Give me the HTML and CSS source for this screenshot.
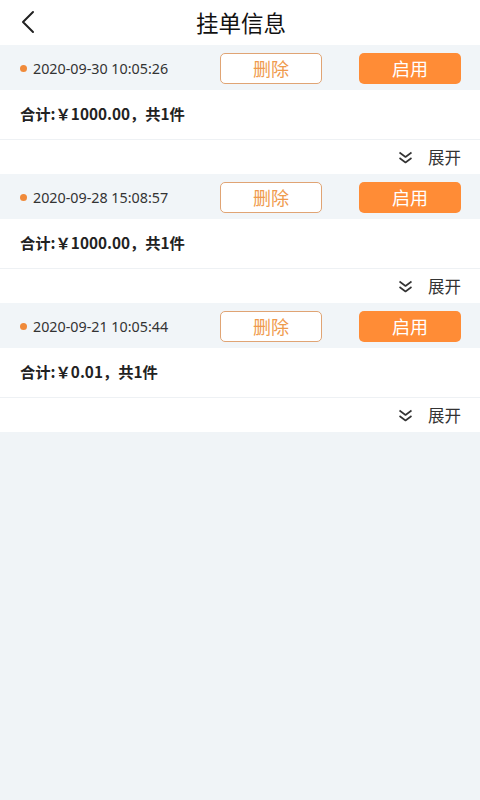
FILE: index.html
```html
<!DOCTYPE html>
<html lang="zh">
<head>
<meta charset="utf-8">
<link rel="stylesheet" href="styles.css">
</head>
<body>
<div class="app">
  <header class="topbar">
    <svg class="back" width="16" height="24" viewBox="0 0 16 24"><path d="M13 2 L3 12 L13 22" fill="none" stroke="#222" stroke-width="2" stroke-linecap="round" stroke-linejoin="round"/></svg>
    <h1 class="title">挂单信息</h1>
  </header>

  <section class="card">
    <div class="card-head">
      <span class="dot"></span>
      <span class="date">2020-09-30 10:05:26</span>
      <button class="btn btn-outline">删除</button>
      <button class="btn btn-fill">启用</button>
    </div>
    <div class="card-total">合计:￥1000.00，共1件</div>
    <div class="card-foot">
      <svg class="chev" width="15" height="13" viewBox="0 0 15 13"><path d="M1.5 1.5 L7.5 6 L13.5 1.5 M1.5 7 L7.5 11.5 L13.5 7" fill="none" stroke="#333" stroke-width="1.6" stroke-linejoin="round"/></svg>
      <span class="expand">展开</span>
    </div>
  </section>

  <section class="card">
    <div class="card-head">
      <span class="dot"></span>
      <span class="date">2020-09-28 15:08:57</span>
      <button class="btn btn-outline">删除</button>
      <button class="btn btn-fill">启用</button>
    </div>
    <div class="card-total">合计:￥1000.00，共1件</div>
    <div class="card-foot">
      <svg class="chev" width="15" height="13" viewBox="0 0 15 13"><path d="M1.5 1.5 L7.5 6 L13.5 1.5 M1.5 7 L7.5 11.5 L13.5 7" fill="none" stroke="#333" stroke-width="1.6" stroke-linejoin="round"/></svg>
      <span class="expand">展开</span>
    </div>
  </section>

  <section class="card">
    <div class="card-head">
      <span class="dot"></span>
      <span class="date">2020-09-21 10:05:44</span>
      <button class="btn btn-outline">删除</button>
      <button class="btn btn-fill">启用</button>
    </div>
    <div class="card-total">合计:￥0.01，共1件</div>
    <div class="card-foot">
      <svg class="chev" width="15" height="13" viewBox="0 0 15 13"><path d="M1.5 1.5 L7.5 6 L13.5 1.5 M1.5 7 L7.5 11.5 L13.5 7" fill="none" stroke="#333" stroke-width="1.6" stroke-linejoin="round"/></svg>
      <span class="expand">展开</span>
    </div>
  </section>
</div>
</body>
</html>
```

FILE: styles.css
```css
* { box-sizing: border-box; margin: 0; padding: 0; }
html, body { height: 100%; }
body {
  background: #f0f4f7;
  font-family: "Noto Sans CJK SC", "Noto Sans", sans-serif;
  color: #222;
}
.app { width: 480px; }
.topbar {
  height: 45px;
  background: #fff;
  display: flex;
  align-items: center;
  justify-content: center;
  position: relative;
}
.back { position: absolute; left: 20px; top: 10px; }
.title { font-size: 22.5px; font-weight: 400; color: #111; line-height: 1; margin-left: 2px; }
.card { background: #fff; }
.card-head {
  height: 45px;
  background: #f1f5f8;
  display: flex;
  align-items: center;
  padding: 1px 19px 0 20px;
}
.dot {
  width: 7px; height: 7px; border-radius: 50%;
  background: #f08a3a;
  margin-right: 6px;
}
.date {
  font-family: "Noto Sans", sans-serif;
  font-size: 14.3px;
  color: #333;
  flex: 1;
}
.btn {
  width: 102px;
  height: 31px;
  border-radius: 5px;
  font-family: "Noto Sans CJK SC", sans-serif;
  font-size: 18px;
  display: flex; align-items: center; justify-content: center;
}
.btn-outline {
  background: #fff;
  border: 1.5px solid #e0a474;
  color: #ef9a4c;
  margin-right: 37px;
}
.btn-fill {
  background: #ff8c36;
  border: none;
  color: #fff;
}
.card-total {
  height: 50px;
  display: flex;
  align-items: center;
  padding-left: 20px;
  padding-bottom: 3px;
  font-size: 15.3px;
  font-weight: 700;
  color: #222;
  border-bottom: 1px solid #eef1f4;
}
.card-foot {
  height: 34px;
  display: flex;
  align-items: center;
  justify-content: flex-end;
  padding-right: 19px;
}
.chev { margin-right: 15px; }
.expand { font-size: 16.5px; color: #333; }
```
